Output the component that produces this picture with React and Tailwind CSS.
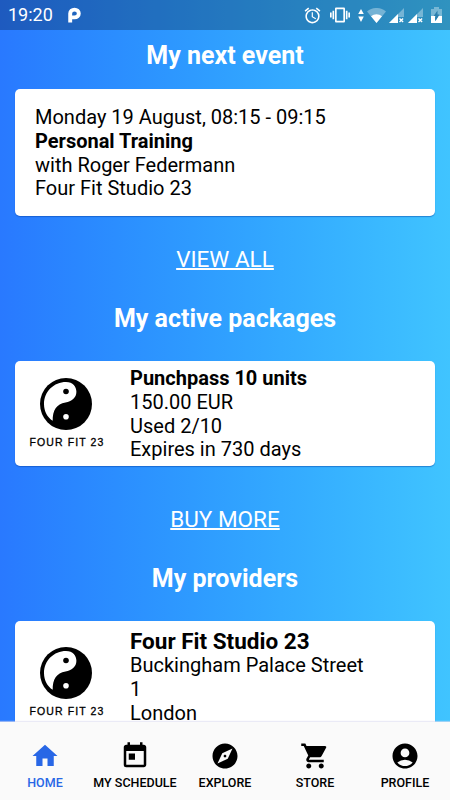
import {
  MdAccessAlarm,
  MdAccountCircle,
  MdExplore,
  MdHome,
  MdShoppingCart,
  MdToday,
  MdVibration,
} from "react-icons/md";

const tabs = [
  { label: "HOME", Icon: MdHome, active: true },
  { label: "MY SCHEDULE", Icon: MdToday },
  { label: "EXPLORE", Icon: MdExplore },
  { label: "STORE", Icon: MdShoppingCart },
  { label: "PROFILE", Icon: MdAccountCircle },
];

const Signal = () => (
  <svg className="h-[15px] w-[15px]" viewBox="0 0 15 15" fill="#fff">
    <path d="M0 15 15 0v9H9v6z" opacity=".35" />
    <path d="M0 15 9 6v9z" />
    <path d="m10.5 10.5 3.6 3.6m0-3.6-3.6 3.6" stroke="#fff" strokeWidth="1.4" />
  </svg>
);

const StatusBar = () => (
  <header className="flex h-[30px] shrink-0 items-center bg-black/25 pl-2 text-white">
    <span className="w-[60px] text-[18px] leading-[30px]">19:20</span>
    <svg className="h-4 w-[14px]" viewBox="0 0 14 16">
      <path
        d="M2.2 15.5V6.5C2.2 4.200 4 2.600 6.500 2.600s4.300 1.600 4.300 3.900-1.800 3.900-4.300 3.900H4"
        fill="none"
        stroke="#fff"
        strokeWidth="3.900"
      />
    </svg>
    <div className="ml-auto flex items-center pr-2">
      <MdAccessAlarm className="mr-2 size-[19px]" />
      <MdVibration className="mr-2 size-5" />
      <svg className="mr-[3px] h-[13px] w-[6px]" viewBox="0 0 6 14" fill="#fff">
        <path d="M3 0 6 5.5H0zM3 14 0 8h6z" />
      </svg>
      <svg className="mr-[3px] h-[15px] w-[19px]" viewBox="0 0 19 15" fill="#fff">
        <path d="M9.5 15 0 3.5C5.5-1.2 13.5-1.2 19 3.5z" opacity=".35" />
        <path d="M9.5 15 4 8.2c3.2-2.7 7.8-2.7 11 0z" />
      </svg>
      <Signal />
      <div className="ml-1">
        <Signal />
      </div>
      <svg className="ml-2 h-4 w-[11px]" viewBox="0 0 11 16" fill="#fff">
        <path d="M0 2h3V0h5v2h3v8H0z" opacity=".35" />
        <path d="M0 9h4v5.2L7.5 9H11v7H0z" />
        <path d="M6.5 3.5v4h2L4.5 14V9H2.7z" fill="#2b7fae" />
      </svg>
    </div>
  </header>
);

const SectionTitle = ({ children }) => (
  <h2 className="text-center text-[25px] leading-[30px] font-bold text-white">
    {children}
  </h2>
);

const TextLink = ({ children }) => (
  <div className="text-center text-[22.5px] leading-[28px] text-white">
    <a href="#" className="underline decoration-[1.5px] underline-offset-[1px]">
      {children}
    </a>
  </div>
);

const Card = ({ className, children }) => (
  <section
    className={`mx-[15px] rounded-[5px] bg-white text-[20px] leading-[23.75px] text-black shadow-[0_1px_1px_rgba(0,60,160,0.45)] ${className}`}
  >
    {children}
  </section>
);

const StudioLogo = ({ className }) => (
  <div className={`flex w-[101px] shrink-0 flex-col items-center ${className}`}>
    <svg className="size-[52px]" viewBox="0 0 52 52">
      <circle cx="26" cy="26" r="26" />
      <path
        d="M26 4C33 4 36.4 9 36.4 13.8 36.4 20 31.5 23.6 25.5 24.4 16.5 25.6 12.5 32.5 12.7 42.8 7.5 39.5 4 33.5 4 26 4 13.5 14 4 26 4z"
        fill="#fff"
      />
      <circle cx="26" cy="13.5" r="2.8" />
      <circle cx="26" cy="38.7" r="2.8" fill="#fff" />
    </svg>
    <span className="mt-[6px] ml-[3px] font-['Liberation_Sans',sans-serif] text-[10.5px] leading-[12px] tracking-[1.1px] whitespace-nowrap [-webkit-text-stroke:0.3px_black]">
      FOUR FIT 23
    </span>
  </div>
);

const TabBar = () => (
  <nav className="grid h-[78px] shrink-0 grid-cols-5 bg-[#fafafa] shadow-[0_-1px_1px_rgba(220,220,240,0.6)]">
    {tabs.map(({ label, Icon, active }) => (
      <a
        key={label}
        href="#"
        className={`flex flex-col items-center pt-[19px] ${active ? "text-[#2867e6]" : "text-black"}`}
      >
        <Icon className="size-[30px]" />
        <span className="mt-1 text-[12.5px] leading-[16px] font-medium whitespace-nowrap">
          {label}
        </span>
      </a>
    ))}
  </nav>
);

export default function App() {
  return (
    <div className="flex h-[800px] w-[450px] flex-col overflow-hidden bg-linear-to-r from-[#2979ff] to-[#40c4ff] font-[Roboto,sans-serif]">
      <StatusBar />
      <main className="min-h-0 flex-1 overflow-hidden pt-[11px]">
        <SectionTitle>My next event</SectionTitle>
        <Card className="mt-[18px] h-[127px] px-5 pt-[17px]">
          <p>Monday 19 August, 08:15 - 09:15</p>
          <p className="font-bold">Personal Training</p>
          <p>with Roger Federmann</p>
          <p>Four Fit Studio 23</p>
        </Card>

        <div className="mt-[29px]">
          <TextLink>VIEW ALL</TextLink>
        </div>
        <div className="mt-[31px]">
          <SectionTitle>My active packages</SectionTitle>
        </div>
        <Card className="mt-[27px] flex h-[105px]">
          <StudioLogo className="mr-[14px] pt-[17px]" />
          <div className="pt-[6px]">
            <p className="font-bold">Punchpass 10 units</p>
            <p>150.00 EUR</p>
            <p>Used 2/10</p>
            <p>Expires in 730 days</p>
          </div>
        </Card>

        <div className="mt-[39px]">
          <TextLink>BUY MORE</TextLink>
        </div>
        <div className="mt-[31px]">
          <SectionTitle>My providers</SectionTitle>
        </div>
        <Card className="mt-[27px] flex h-[130px]">
          <StudioLogo className="mr-[14px] pt-[26px]" />
          <div className="pt-[7px]">
            <p className="text-[22.5px] leading-[26px] font-bold">Four Fit Studio 23</p>
            <p>Buckingham Palace Street</p>
            <p>1</p>
            <p>London</p>
          </div>
        </Card>
      </main>
      <TabBar />
    </div>
  );
}
